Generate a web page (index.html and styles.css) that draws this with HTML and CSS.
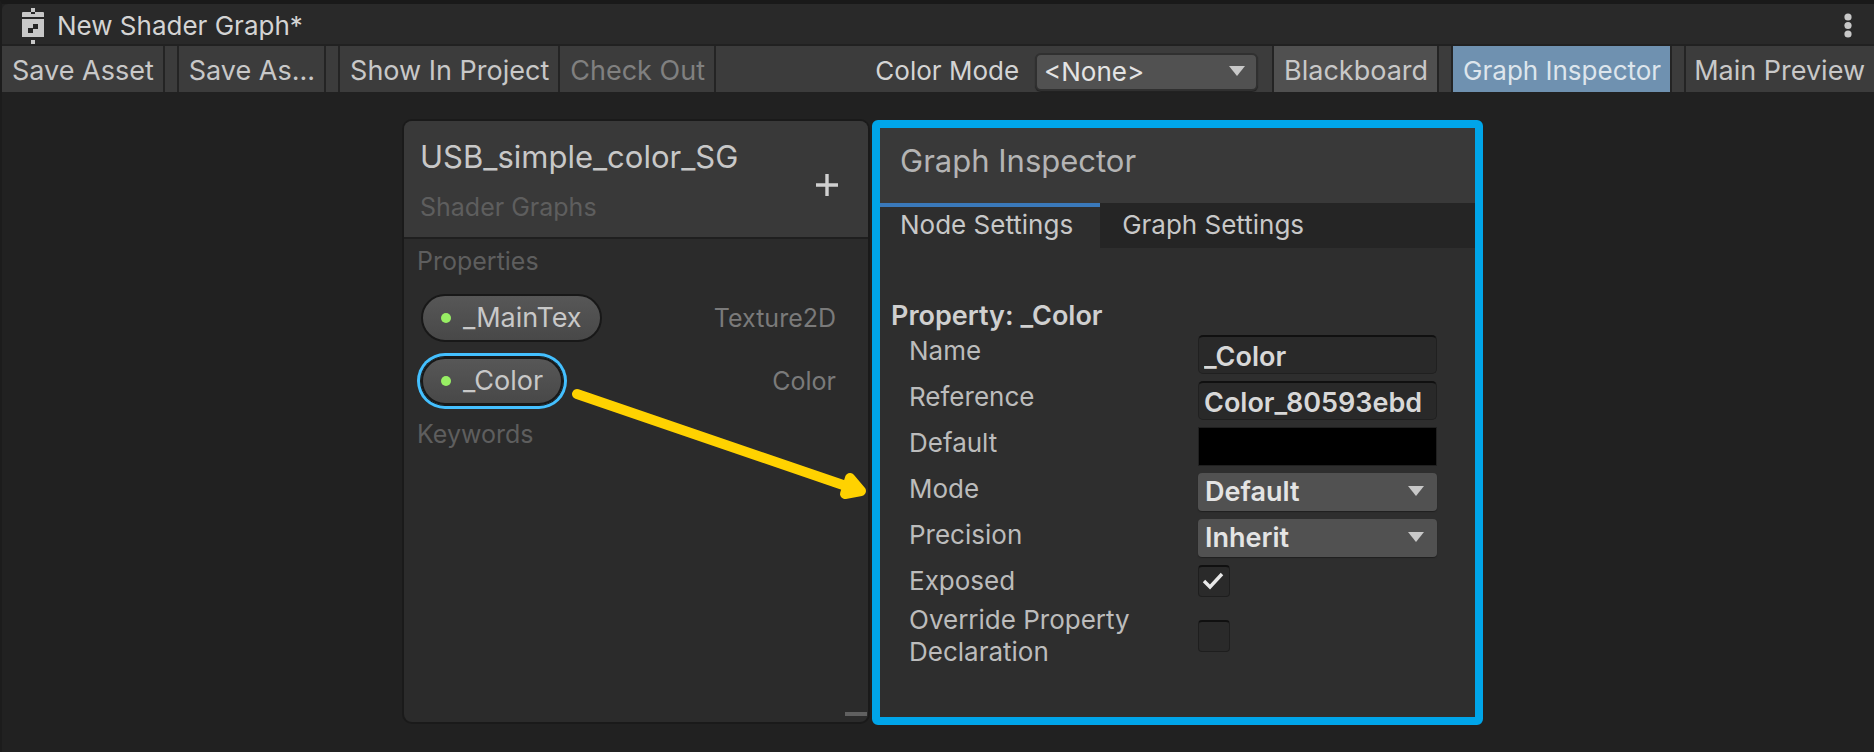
FILE: index.html
```html
<!DOCTYPE html>
<html lang="en">
<head>
<meta charset="utf-8">
<title>New Shader Graph*</title>
<link rel="stylesheet" href="styles.css">
</head>
<body>
<div class="window">
  <header class="titlebar">
    <svg class="titlebar-icon" viewBox="0 0 24 38" width="24" height="38" aria-hidden="true">
      <path fill="#c8c8c8" d="M10 1h4v4h8a1 1 0 0 1 1 1v4H1V6a1 1 0 0 1 1-1h8z"/>
      <path fill="#262626" d="M10 5h4v2h-4z"/>
      <path fill="#c8c8c8" d="M1 12h22v18H1zM10 33h4v4h-4z"/>
      <path fill="#262626" d="M12 17h5v5h-5zM7 21h5v5H7z"/>
    </svg>
    <h1 class="titlebar-title">New Shader Graph*</h1>
    <button class="kebab" type="button" aria-label="Window menu">
      <svg viewBox="0 0 8 26" width="8" height="26" aria-hidden="true" fill="#c8c8c8">
        <circle cx="4" cy="4" r="3.6"/><circle cx="4" cy="12.5" r="3.6"/><circle cx="4" cy="21" r="3.6"/>
      </svg>
    </button>
  </header>

  <nav class="toolbar" aria-label="Graph toolbar">
    <button class="tool" type="button">Save Asset</button>
    <span class="tool-gap"></span>
    <button class="tool" type="button">Save As...</button>
    <span class="tool-gap"></span>
    <button class="tool" type="button">Show In Project</button>
    <button class="tool" type="button" disabled>Check Out</button>
    <label class="mode-label" for="color-mode">Color Mode</label>
    <span class="dropdown dropdown-mode">
      <select id="color-mode"><option>&lt;None&gt;</option></select>
    </span>
    <button class="tool tool-raised" type="button">Blackboard</button>
    <span class="tool-gap"></span>
    <button class="tool tool-active" type="button" aria-pressed="true">Graph Inspector</button>
    <span class="tool-gap"></span>
    <button class="tool tool-last" type="button">Main Preview</button>
  </nav>

  <main class="canvas">
    <section class="blackboard">
      <header class="blackboard-head">
        <div>
          <h2 class="blackboard-title">USB_simple_color_SG</h2>
          <p class="blackboard-sub">Shader Graphs</p>
        </div>
        <button class="add" type="button" aria-label="Add property">
          <svg viewBox="0 0 22 22" width="22" height="22" aria-hidden="true"><path d="M11 0v22M0 11h22" stroke="#d0d0d0" stroke-width="3.4"/></svg>
        </button>
      </header>
      <div class="blackboard-body">
        <h3 class="group">Properties</h3>
        <ul class="props">
          <li class="prop"><button class="pill" type="button"><i class="dot"></i>_MainTex</button><span>Texture2D</span></li>
          <li class="prop"><button class="pill pill-selected" type="button"><i class="dot"></i>_Color</button><span>Color</span></li>
        </ul>
        <h3 class="group">Keywords</h3>
      </div>
      <span class="resize"></span>
      <svg class="pointer" viewBox="0 0 300 120" width="300" height="120" aria-hidden="true">
        <path d="M9 9L278 101" stroke="#ffd200" stroke-width="10" stroke-linecap="round"/>
        <path d="M282 93L277 109L293 106Z" fill="#ffd200" stroke="#ffd200" stroke-width="10" stroke-linejoin="round"/>
      </svg>
    </section>

    <section class="inspector">
      <h2 class="inspector-title">Graph Inspector</h2>
      <div class="tabs" role="tablist">
        <button class="tab tab-active" type="button" role="tab" aria-selected="true">Node Settings</button>
        <button class="tab" type="button" role="tab" aria-selected="false">Graph Settings</button>
      </div>
      <form class="form">
        <h3 class="form-title">Property: _Color</h3>
        <div class="row"><label for="name">Name</label><input class="field" id="name" type="text" value="_Color"></div>
        <div class="row"><label for="reference">Reference</label><input class="field" id="reference" type="text" value="Color_80593ebd"></div>
        <div class="row"><label for="default">Default</label><button class="swatch" id="default" type="button"></button></div>
        <div class="row"><label for="mode">Mode</label><span class="dropdown"><select id="mode"><option>Default</option></select></span></div>
        <div class="row"><label for="precision">Precision</label><span class="dropdown"><select id="precision"><option>Inherit</option></select></span></div>
        <div class="row row-check"><label for="exposed">Exposed</label><span class="check"><input id="exposed" type="checkbox" checked><svg viewBox="0 0 32 32" width="32" height="32" aria-hidden="true"><path d="M6 16L12 22L24 9" fill="none" stroke="#e8e8e8" stroke-width="3.4"/></svg></span></div>
        <div class="row row-check"><label for="override">Override Property Declaration</label><span class="check"><input id="override" type="checkbox"></span></div>
      </form>
    </section>
  </main>
</div>
</body>
</html>
```

FILE: styles.css
```css
* { box-sizing: border-box; }

body {
  margin: 0;
  background: #212121;
  color: #c8c8c8;
  font: 26px/32px Inter, "Liberation Sans", sans-serif;
}

h1, h2, h3, p, ul { margin: 0; padding: 0; font-weight: 400; font-size: inherit; }
ul { list-style: none; }

button, input, select {
  margin: 0;
  padding: 0;
  border: 0;
  background: none;
  color: inherit;
  font: inherit;
}

.window {
  display: flex;
  flex-direction: column;
  min-height: 100vh;
  border-top: 4px solid #191919;
  border-left: 2px solid #1c1c1c;
}

.titlebar {
  display: flex;
  align-items: center;
  gap: 12px;
  height: 42px;
  padding: 4px 22px 0 19px;
  border-top-left-radius: 6px;
  background: #292929;
  border-bottom: 2px solid #212121;
}
.titlebar-title { flex: 1; color: #d4d4d4; }
.kebab { display: flex; }

.toolbar {
  display: flex;
  height: 46px;
  background: #3c3c3c;
}
.tool {
  padding: 3px 9px 0 10px;
  border-right: 2px solid #242424;
  font-size: 27px;
  white-space: nowrap;
}
.tool:disabled { color: #808080; }
.tool-gap { width: 14px; border-right: 2px solid #242424; }
.tool-raised { background: #505050; border-left: 2px solid #242424; }
.tool-active { background: #6f91b0; color: #dde5ec; font-size: 26px; }
.tool-last { padding-left: 8px; border-right: 0; }
.mode-label { margin-left: auto; padding-top: 3px; align-self: center; color: #d4d4d4; }

.dropdown { position: relative; display: flex; }
.dropdown::after {
  content: "";
  position: absolute;
  right: 13px;
  top: 13px;
  border: 8px solid transparent;
  border-top: 10px solid #c8c8c8;
  border-bottom: 0;
  pointer-events: none;
}
.dropdown select {
  appearance: none;
  width: 100%;
  height: 38px;
  padding: 0 7px;
  border-radius: 4px;
  background: #515151;
  box-shadow: 0 1px 1px #202020;
  color: #e4e4e4;
  font-size: 27px;
  font-weight: 600;
}
.dropdown-mode { width: 223px; margin: 7px 14px 0 16px; }
.dropdown-mode select { border: 2px solid #303030; border-radius: 6px; font-size: 26px; font-weight: 400; }

.canvas {
  flex: 1;
  display: grid;
  grid-template-columns: 402fr 468fr 611fr 391fr;
  align-content: start;
  align-items: start;
  padding: 29px 0 24px;
}

.blackboard {
  position: relative;
  grid-column: 2;
  display: flex;
  flex-direction: column;
  align-self: stretch;
  margin: 0 4px 3px 0;
  border-radius: 8px;
  background: #2b2b2b;
  box-shadow: 0 0 0 2px #1a1a1a;
}
.blackboard-head {
  display: flex;
  justify-content: space-between;
  align-items: center;
  height: 118px;
  padding: 12px 30px 6px 16px;
  border-radius: 8px 8px 0 0;
  background: #393939;
  border-bottom: 2px solid #1f1f1f;
}
.blackboard-title { font-size: 31px; line-height: 50px; }
.blackboard-sub { font-size: 25px; line-height: 50px; color: #5e5e5e; }
.add { display: flex; margin-top: 6px; }
.blackboard-body { padding: 6px 32px 0 13px; }
.group { font-size: 25px; color: #5e5e5e; }
.props { padding: 9px 0 6px; }
.prop {
  display: flex;
  justify-content: space-between;
  align-items: center;
  height: 63px;
  padding-left: 4px;
  font-size: 25px;
  color: #7a7a7a;
}
.pill {
  display: flex;
  align-items: center;
  gap: 12px;
  height: 48px;
  padding: 0 18px;
  border: 2px solid #181818;
  border-radius: 24px;
  background: linear-gradient(#575757, #484848);
  color: #c8c8c8;
  font-size: 27px;
}
.pill-selected { box-shadow: 0 0 0 1px #181818, 0 0 0 4px #44c0ff; }
.dot { width: 10px; height: 10px; border-radius: 50%; background: #98ef64; }
.resize { position: absolute; right: 1px; bottom: 6px; width: 22px; height: 4px; background: #606060; }
.pointer { position: absolute; right: 0; top: 264px; pointer-events: none; }

.inspector {
  grid-column: 3;
  border: 8px solid #00a5e9;
  border-radius: 6px;
  background: #2e2e2e;
  margin-top: -1px;
  min-height: 605px;
}
.inspector-title {
  height: 75px;
  padding: 17px 20px;
  background: #393939;
  color: #b4b4b4;
  font-size: 31px;
}
.tabs { display: flex; background: #252525; }
.tab { height: 45px; padding: 0 22px 5px; border-top: 4px solid transparent; }
.tab-active { padding: 0 27px 5px 20px; border-top-color: #3a79bb; background: #2e2e2e; }

.form { display: grid; gap: 7px; padding: 52px 38px 0 11px; }
.form-title { margin-bottom: -4px; color: #d0d0d0; font-size: 27px; font-weight: 600; }
.row {
  display: grid;
  grid-template-columns: minmax(0, 289px) 1fr;
  min-height: 39px;
  padding-left: 18px;
  color: #bcbcbc;
}
.row label { padding-right: 40px; }
.row-check { min-height: 31px; align-items: center; }
.field {
  width: 100%;
  height: 39px;
  padding: 3px 5px 0;
  border: 1px solid #202020;
  border-top: 2px solid #101010;
  border-radius: 5px;
  background: #292929;
  color: #d8d8d8;
  font-size: 27px;
  font-weight: 600;
}
.swatch { height: 39px; border: 1px solid #202020; background: #000; }
.check { position: relative; display: flex; width: 32px; height: 32px; }
.check input {
  appearance: none;
  width: 32px;
  height: 32px;
  border: 1px solid #1e1e1e;
  border-top: 2px solid #101010;
  border-radius: 4px;
  background: #2a2a2a;
}
.check svg { position: absolute; inset: 0; pointer-events: none; }
```
